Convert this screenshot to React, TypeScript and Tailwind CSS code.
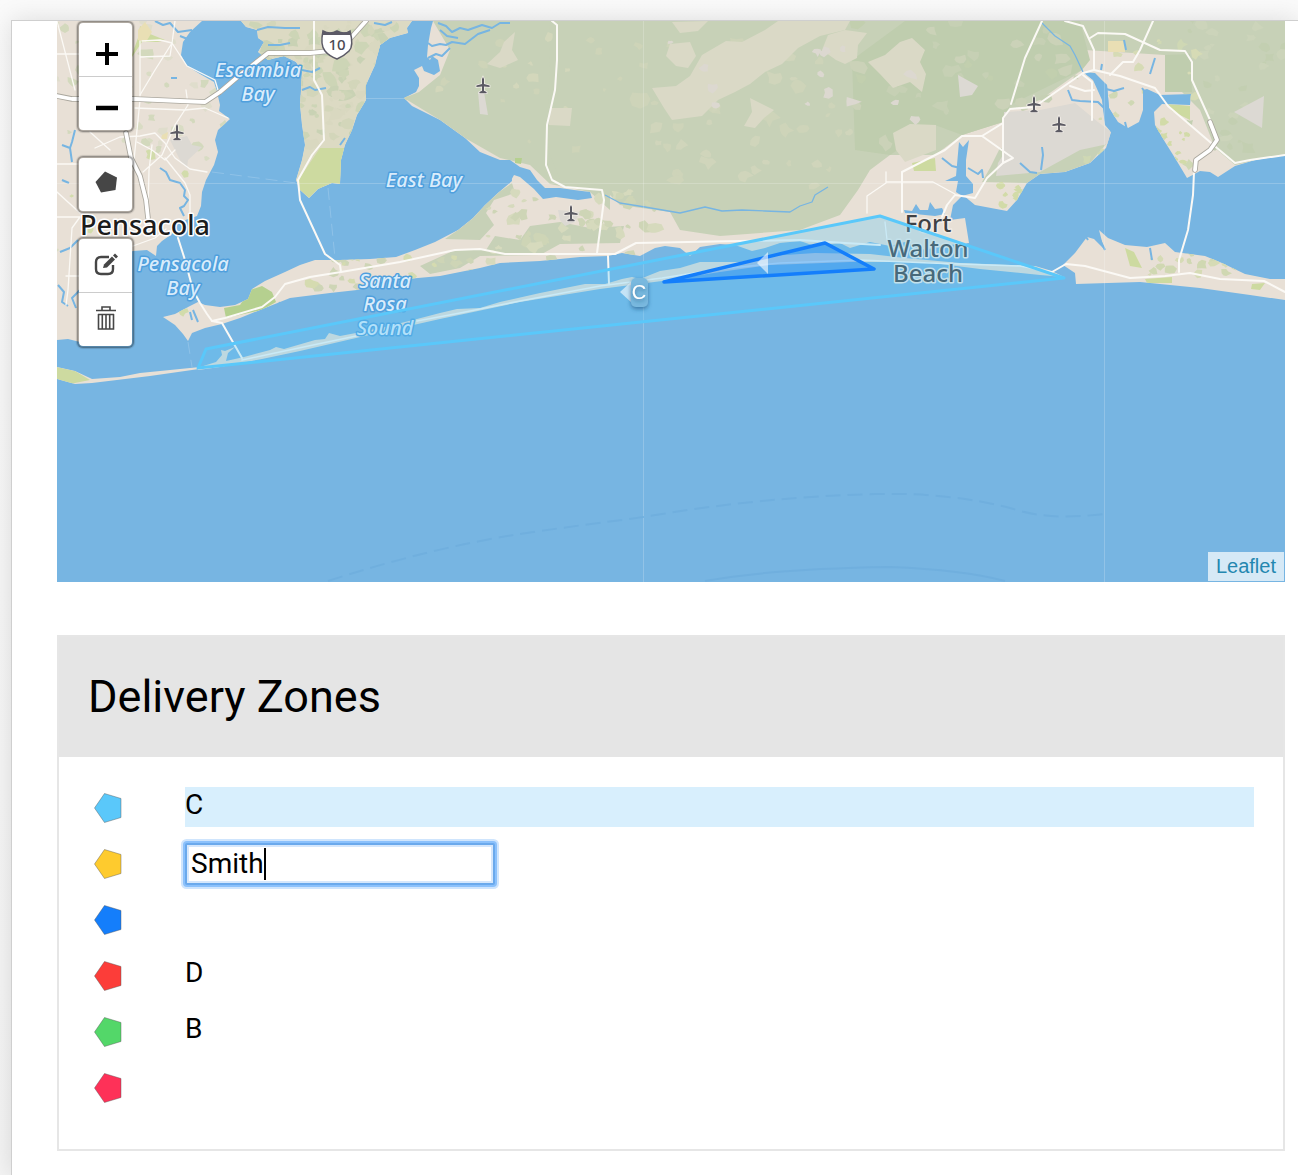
import React from "react";

/* ---------- map geometry ---------- */

const WEST =
  "M57 21H202L190 32L183 42L181 55L187 66L200 74L214 82L217 92L220 105L219 111L230 119L218 130L215 140L218 152L214 165L206 180L202 192L201 206L197 216L177 223L172 234L162 241L157 246L156 256L147 250L133 251L118 256L98 268L88 290L82 312L80 342L68 339L57 340Z";
const MIDDLE =
  "M241 21L246 27L257 30L258 38L264 42L258 52L268 60L284 56L296 62L302 72L301 90L300 105L302 125L305 145L302 160L296 180L300 190L309 198L318 189L332 183L340 184L341 160L345 145L352 130L357 115L366 100L366 85L375 65L380 45L390 38L408 33L407 28L412 21Z";
const MAIN =
  "M433 21L431 28L428 45L427 57L430 60L432 56L438 60L440 71L434 75L424 71L422 66L414 70L419 78L419 86L416 92L404 98L412 106L440 120L465 138L480 152L500 160L510 161L512 181L499 192L485 205L473 218L458 230L435 242L415 250L396 257L370 259L340 260L315 260L300 265L285 272L265 281L252 289L248 299L235 305L220 307L205 305L198 302L190 306L175 314L163 317L175 325L183 334L188 341L192 333L205 328L222 324L240 318L265 308L290 298L330 293L357 290L385 281L440 276L480 268L500 263L540 261L580 257L608 256L622 253L640 256L655 248L665 246L680 248L690 256L700 247L720 244L735 245L752 251L765 248L780 243L800 241L815 246L840 243L850 248L870 242L890 246L905 242L925 250L940 246L969 243L965 218L950 220L953 205L963 195L975 205L1007 211L1017 200L1027 183L1040 174L1065 172L1090 163L1106 148L1111 132L1105 125L1102 100L1093 80L1083 72L1093 74L1107 85L1109 108L1118 122L1128 128L1139 122L1143 110L1143 90L1147 89L1160 95L1191 94L1190 105L1162 104L1154 112L1155 125L1165 142L1175 158L1187 178L1200 171L1210 172L1218 177L1235 166L1255 160L1285 155V21Z";
const DESTIN =
  "M1063 265L1075 253L1087 237L1094 239L1104 249L1099 230L1108 238L1125 245L1147 247L1165 243L1175 252L1205 256L1222 263L1245 274L1270 279L1285 279V300L1250 295L1200 288L1140 282L1076 284L1075 273Z";
const ISLAND =
  "M197 368L216 362L222 355L221 350L225 351L235 347L228 353L226 361L244 357L270 350L276 347L284 349L315 340L325 339L329 333L340 336L356 333L385 327L417 319L440 313L457 309L480 308L500 302L540 293L585 284L605 284L622 279L632 277L640 279L660 271L680 268L700 262L740 262L770 256L815 253L870 254L905 258L960 263L1035 266L1052 271L1064 277L1040 275L980 269L925 262L850 262L770 265L720 272L662 281L600 289L520 302L440 319L400 328L356 338L300 351L262 359L220 367L198 370Z";
const WEST_ISLAND =
  "M57 367L75 371L92 379L120 377L140 373L190 368L200 367L199 369L150 376L92 383L75 384L57 379Z";

const FOREST = [
  "M433 21H610V210L590 192L550 184L530 165L500 158L465 138L440 120L404 98L419 92L440 75L450 50Z",
  "M550 21H1285V154L1235 165L1215 148L1200 110L1180 90L1165 55L1085 50L1082 70L1040 100L1004 112L1003 122L962 135L935 155L890 155L870 170L858 190L840 215L800 230L720 236L680 230L670 212L620 205L600 185L560 180L548 150Z",
  "M512 183L499 192L485 205L473 218L458 230L445 239L480 240L494 225L486 213L494 200L515 193Z",
  "M455 250L486 250L495 236L520 240L530 226L560 222L590 228L624 226L620 243L560 244L540 255L480 256L460 268L430 274L420 266Z",
  "M1000 148L1040 150L1085 142L1108 142L1090 163L1065 172L1040 174L1028 183L982 182L990 168Z",
];
const DARK_FOREST = [
  "M852 60L905 21H1080L1090 60L1082 70L1010 105L1003 122L962 135L935 125L890 155L855 150Z",
  "M1165 55L1190 54L1192 92L1165 92Z",
];
const SANDY = [
  "M652 88L676 86L690 76L702 55L726 41L742 42L765 30L778 21L850 21L845 30L820 36L798 48L782 64L765 72L750 84L735 92L718 100L702 116L672 120L664 108Z",
  "M828 35L845 30L867 33L858 45L857 58L845 64L836 60L822 50Z",
  "M868 62L885 55L900 42L912 38L925 50L920 62L926 74L922 92L910 82L893 88L880 74Z",
  "M672 22L708 21L698 31L680 33Z",
  "M487 64L500 52L504 42L515 32L512 50L518 60L500 68Z",
  "M550 108H572L570 126L549 125Z",
  "M750 98L762 104L774 110L764 118L755 128L744 126L752 112Z",
  "M893 133L910 124L936 125V150L905 162L896 150Z",
  "M670 44L690 42L696 56L688 68L676 66L666 56Z",
];
const GRAY = [
  "M1004 112L1040 110L1075 103L1098 122L1111 132L1108 144L1080 150L1040 172L996 176L998 163L1003 155Z",
  "M1234 112L1264 96L1262 128Z",
  "M958 75L978 86L972 95L960 97Z",
  "M170 140L187 136L192 145L202 147L188 160L187 168L180 160Z",
  "M478 92L484 92L488 115L480 114Z",
  "M558 210L580 212L575 222L565 226L560 220Z",
];
const LIME = [
  "M320 148L344 148L340 184L332 183L318 189L309 198L300 190L297 182Z",
  "M912 163L935 158L936 171L914 171Z",
  "M1168 104L1190 106V120L1172 111Z",
  "M57 367L75 371L90 380L70 384L57 379Z",
  "M1145 279L1172 277V283H1147Z",
  "M1252 284L1265 283L1260 290L1251 289Z",
  "M1125 248L1134 252L1142 268L1130 266Z",
  "M130 60L138 38L140 26L150 34L165 40L158 42L142 42Z",
];
const GREEN = [
  "M250 290L262 286L272 292L276 302L262 310L226 318L224 308L240 305Z",
  "M515 158L522 158L521 164L515 163Z",
];
const YELLOW = ["M1108 41H1125V52H1108Z", "M138 30L145 22L152 32L146 42L138 40Z", "M162 135L168 132L167 139L161 139Z"];

const WATER_AREAS = [
  "M510 160L520 167L530 170L537 180L545 188L560 188L574 190L590 192L592 198L578 200L556 197L543 199L534 189L520 177L514 175L509 184L500 182L500 160Z",
  "M959 142L963 147L969 140L966 160L966 176L973 184L973 193L962 196L956 192L958 181L945 181L956 176Z",
  "M904 210L912 211L916 204L920 210L928 210L930 202L935 209L942 208L945 214L935 216L905 213Z",
  "M1083 72L1095 73L1107 85L1109 108L1118 124L1112 134L1105 122L1102 96L1096 82Z",
];
const STREAMS = [
  "M605 195L620 203L645 207L680 213L705 207L722 211L742 210L765 211L790 212L800 206L812 202L815 195L828 187",
  "M1042 23L1055 36L1070 46L1075 55L1083 72",
  "M942 158L952 166L960 168M968 168L978 174L982 170L983 178M1037 173L1030 172L1020 163M1041 170L1043 155L1042 147",
  "M1068 90L1072 100L1080 101L1098 102L1104 108M1106 89L1114 91L1124 88M1125 122L1127 130M1145 92L1142 88",
  "M1124 40L1126 50M1155 58L1150 74M1100 240L1105 250M1150 248L1152 260M1088 240L1083 232M1102 64L1101 70",
  "M428 43L432 46L440 44L446 45L452 42L465 44L478 34L490 30M438 23L446 26L452 32L460 28L468 30L482 25L492 28L500 23L510 23M428 58L436 54L442 56L450 48M440 30L447 36L458 38",
  "M257 30L268 27L285 28L300 28M268 45L280 45L290 43M302 90L310 87L315 90L326 88M302 70L312 72L320 68M374 23L385 25L392 22",
  "M160 168L166 172L170 180L180 183L185 190L184 196L188 200L184 206L180 208L184 216M155 21L163 25L170 23L178 32L192 30M180 36L190 40L203 40",
  "M75 130L72 142L70 148L62 145M70 148L72 162M78 240L70 248L60 252M58 285L64 292L62 302L68 306M80 290L72 298L76 308",
  "M62 180L69 183M340 145L345 138M192 320L190 312M198 322L193 310M280 302L278 308M171 78H177",
];

const MAJOR_ROADS = [
  "M57 96L72 99L135 99L180 101L205 102L220 92L240 75L268 53L310 53L340 50L366 21",
  "M126 133L131 158L140 176L146 200L148 218",
  "M1210 122L1217 140L1210 150L1196 160L1195 170",
];
const ROADS = [
  "M314 21V80L322 95L324 140L312 155L298 180L300 200L325 254L340 265L341 272",
  "M212 321L225 318L262 307L275 297L285 284L310 277L341 272L400 262L455 250L480 249L505 254L600 254L615 254L636 243L740 241L800 240L845 243L880 245",
  "M552 21L557 25V60L555 90L547 125L546 165L552 180L565 187L602 190L604 200L597 253",
  "M178 238L185 260L193 290L200 303L207 314L212 321L222 323L242 358",
  "M608 256L609 284",
  "M1052 272L1066 264L1085 266L1130 278L1165 276L1190 273L1220 279L1264 281L1285 292",
  "M1042 21L1025 58L1011 104",
  "M1065 21L1083 26L1094 50V70L1083 73L1050 96L1034 107L1010 109L1003 118L1003 163",
  "M1094 70L1120 76L1155 88L1168 106L1217 148L1235 163L1250 160L1285 155",
  "M1090 38L1098 33L1125 34L1160 50L1185 51L1192 62V80L1210 120",
  "M1153 21L1140 50L1133 62L1123 62L1110 75M1083 75L1092 82L1092 120M1070 86L1085 91L1094 90",
  "M1194 172L1193 195L1188 230L1179 260V272",
  "M902 212V172L945 150L962 136H982L1013 158L1003 163L987 178L975 198L955 195L947 205L942 217M1003 123L982 136",
  "M886 172V183L867 196V213M886 182H933L955 194M887 240L885 222",
  "M57 54H80M57 21L75 90M140 41V100L133 170M140 57L170 56L172 43L160 40L142 41M175 21L172 43L187 66L215 80L218 90",
  "M172 43L155 70L140 95M57 164H78M57 217H80L72 228L68 290L66 305M66 276H82M57 192L80 213",
  "M90 132L110 150M95 148L120 137L140 136L155 133L165 143L175 158L190 169L207 172M137 142L152 150L165 160L175 150",
  "M152 145L149 170L148 210M186 90L188 105L175 125L162 155L143 172M135 108L185 110L205 108L228 118M165 158L185 183L190 195V216",
  "M133 246L155 238L166 229",
];
const BEACH_ROAD =
  "M242 360L275 353L356 336M417 321L460 313L520 301L600 286L662 278L720 269L780 263L860 260L930 263L1020 266L1052 272";

const PLANES: [number, number][] = [
  [177, 132],
  [483, 85],
  [571, 213],
  [1034, 104],
  [1059, 124],
];

/* Scattered vegetation patches, seeded so every render is identical. */
type Patch = { d: string; fill: string };
const scatter = (
  seed: number,
  count: number,
  [x0, y0, x1, y1]: [number, number, number, number],
  size: number,
  fills: string[],
): Patch[] => {
  let s = seed;
  const rnd = () => {
    s = (s * 16807) % 2147483647;
    return s / 2147483647;
  };
  return Array.from({ length: count }, () => {
    const cx = x0 + rnd() * (x1 - x0);
    const cy = y0 + rnd() * (y1 - y0);
    const r = size * (0.4 + rnd());
    const n = 8;
    const pts = Array.from({ length: n }, (_, i) => {
      const a = (i / n) * Math.PI * 2;
      const k = r * (0.45 + rnd() * 0.75);
      return `${(cx + Math.cos(a) * k * 1.2).toFixed(1)} ${(cy + Math.sin(a) * k).toFixed(1)}`;
    });
    return { d: `M${pts.join("L")}Z`, fill: fills[Math.floor(rnd() * fills.length)] };
  });
};

const PATCHES: Patch[] = [
  ...scatter(11, 50, [57, 21, 225, 150], 5, ["#d9dcc4", "#d3d9bd", "#dfddcc"]),
  ...scatter(12, 18, [57, 140, 215, 330], 4, ["#d8dcc3", "#d2dcab"]),
  ...scatter(21, 170, [245, 21, 400, 148], 6, ["#c9d2b4", "#d3d6ba", "#d9d8c0", "#cdd5b6"]),
  ...scatter(31, 50, [480, 190, 660, 262], 5, ["#ced5b6", "#d6dabd"]),
  ...scatter(32, 30, [300, 255, 480, 290], 4, ["#ced5b6", "#d5dbb0"]),
  ...scatter(41, 40, [640, 40, 850, 190], 6, ["#ced4b9", "#d0d5bb"]),
  ...scatter(42, 22, [440, 21, 640, 150], 4, ["#ced4b8", "#d3d7bb"]),
  ...scatter(43, 40, [855, 21, 1080, 150], 6, ["#c6d0b4", "#cbd2b8", "#c2cfae"]),
  ...scatter(44, 30, [1190, 21, 1285, 150], 5, ["#ccd4ba", "#c3cfb1"]),
  ...scatter(51, 30, [1085, 40, 1200, 170], 4, ["#d6dbb5", "#cfd8b4"]),
  ...scatter(52, 20, [1155, 120, 1190, 165], 3, ["#d2dba8"]),
  ...scatter(53, 22, [1150, 250, 1240, 275], 4, ["#d0d8b2", "#d6dbb5"]),
  ...scatter(54, 14, [1000, 183, 1022, 210], 3, ["#d2dba8"]),
];
const BARE_PATCHES = scatter(61, 14, [670, 40, 920, 125], 5, ["#dcd8d0"]);

const fillPaths = (items: string[], fill: string) =>
  items.map((d, i) => <path key={i} d={d} fill={fill} />);

function Plane({ x, y }: { x: number; y: number }) {
  return (
    <path
      fill="#5b5a63"
      stroke="#f3efe9"
      strokeWidth={1.5}
      paintOrder="stroke"
      d={`M${x} ${y - 8}l1 2v5l5.600 1.600v1.400l-5.600-.5v4.300l2.600 1.200v1.200h-7.200v-1.200l2.600-1.200v-4.300l-5.600.5v-1.400l5.600-1.600v-5z`}
    />
  );
}

function MapLabel({
  x,
  lines,
  kind = "water",
}: {
  x: number;
  lines: [number, string][];
  kind?: "water" | "city" | "town";
}) {
  const style = {
    water: "fill-[#d9ecfb] stroke-[#4f9fdd] text-[20px] italic font-medium",
    city: "fill-[#1c1c1c] stroke-white text-[27px] font-medium",
    town: "fill-[#3f4144] stroke-[#f1ece6] text-[24px] font-medium",
  }[kind];
  return (
    <text
      className={style}
      fontFamily="'Noto Sans', 'Open Sans', sans-serif"
      textAnchor="middle"
      strokeWidth={3}
      strokeLinejoin="round"
      paintOrder="stroke"
    >
      {lines.map(([y, t]) => (
        <tspan key={t} x={x} y={y}>
          {t}
        </tspan>
      ))}
    </text>
  );
}

function MapCanvas() {
  return (
    <svg
      className="block h-full w-full"
      viewBox="57 21 1228 561"
      preserveAspectRatio="xMinYMin slice"
      role="img"
      aria-label="Map of Pensacola and Fort Walton Beach"
    >
      <defs>
        <clipPath id="land">
          <path d={WEST} />
          <path d={MIDDLE} />
          <path d={MAIN} />
          <path d={DESTIN} />
          <path d={WEST_ISLAND} />
        </clipPath>
        <filter id="tagShadow" x="-50%" y="-50%" width="200%" height="200%">
          <feDropShadow dx="0" dy="2" stdDeviation="2" floodColor="#1d4e78" floodOpacity="0.6" />
        </filter>
      </defs>

      <rect x="57" y="21" width="1228" height="561" fill="#77b5e2" />
      {fillPaths([WEST, MIDDLE, MAIN, DESTIN, WEST_ISLAND, ISLAND], "#e8e0d6")}

      <g clipPath="url(#land)">
        <path d={MIDDLE} fill="#dcdac3" />
        {fillPaths(FOREST, "#c7d1b7")}
        {fillPaths(DARK_FOREST, "#bfcdae")}
        {PATCHES.map((p, i) => (
          <path key={i} d={p.d} fill={p.fill} />
        ))}
        {fillPaths(SANDY, "#dad9c6")}
        {BARE_PATCHES.map((p, i) => (
          <path key={i} d={p.d} fill={p.fill} />
        ))}
        {fillPaths(GRAY, "#dcd9d3")}
        {fillPaths(LIME, "#cddaa0")}
        {fillPaths(GREEN, "#b5d08f")}
        {fillPaths(YELLOW, "#e9dfb4")}
      </g>

      {fillPaths(WATER_AREAS, "#77b5e2")}
      {STREAMS.map((d, i) => (
        <path
          key={i}
          d={d}
          fill="none"
          stroke="#77b5e2"
          strokeWidth={i === 0 || i === 1 ? 1.3 : 2}
          strokeLinejoin="round"
        />
      ))}

      <g fill="none" strokeLinejoin="round" strokeLinecap="round">
        {ROADS.map((d, i) => (
          <path key={i} d={d} stroke="#fbf9f5" strokeWidth={i < 13 ? 2 : 1.3} />
        ))}
        <path d={BEACH_ROAD} stroke="#fbf9f5" strokeWidth={1.6} />
        {MAJOR_ROADS.map((d, i) => (
          <path key={i} d={d} stroke="#a9a69d" strokeWidth={5.5} />
        ))}
        {MAJOR_ROADS.map((d, i) => (
          <path key={i} d={d} stroke="#ffffff" strokeWidth={3.8} />
        ))}
      </g>

      {/* tile seams and maritime boundaries */}
      <path
        d="M643.500 21V582M1104.500 21V582M57 183.500H1285M366 98.500H404"
        stroke="#ffffff"
        strokeOpacity="0.2"
        fill="none"
      />
      <g fill="none" stroke="#70afde" strokeWidth="2">
        <path
          strokeDasharray="15 7"
          d="M328 581Q430 548 520 534C600 522 620 521 662 514C730 503 800 496 875 494C930 493 970 498 1010 508C1040 518 1070 518 1104 514"
        />
        <path d="M705 581C760 571 820 568 890 567C940 569 975 573 1005 581" />
      </g>
      <path
        d="M212 172L296 183M328 188L335 258M188 342L192 367"
        stroke="#8fc2e8"
        strokeDasharray="12 6"
        fill="none"
      />

      {PLANES.map(([x, y]) => (
        <Plane key={x} x={x} y={y} />
      ))}

      <g>
        <path
          d="M323 31Q330 35 337 31Q344 35 350 31Q354 46 349 51Q344 56 337 59Q329 56 325 51Q320 45 323 31Z"
          fill="#ffffff"
          stroke="#5c5a66"
          strokeWidth="1.500"
        />
        <path d="M323 31Q330 34 337 31Q344 34 350 31L351 35H322Z" fill="#5c5a66" />
        <text
          x="337"
          y="50"
          textAnchor="middle"
          className="fill-[#4c4b55] text-[15px] font-medium"
          fontFamily="'Noto Sans', sans-serif"
        >
          10
        </text>
      </g>

      <MapLabel x={258} lines={[[77, "Escambia"], [101, "Bay"]]} />
      <MapLabel x={424} lines={[[187, "East Bay"]]} />
      <MapLabel x={183} lines={[[271, "Pensacola"], [295, "Bay"]]} />
      <MapLabel x={385} lines={[[288, "Santa"], [311, "Rosa"], [335, "Sound"]]} />
      <MapLabel x={145} lines={[[235, "Pensacola"]]} kind="city" />
      <MapLabel x={928} lines={[[232, "Fort"]]} kind="town" />
      <MapLabel x={928} lines={[[257, "Walton"]]} kind="town" />
      <MapLabel x={928} lines={[[282, "Beach"]]} kind="town" />

      {/* delivery zone outlines */}
      <path
        d="M198 368L206 349L880 216L1064 278Z"
        fill="#5ac8fa"
        fillOpacity="0.3"
        stroke="#5ac8fa"
        strokeWidth="3"
        strokeLinejoin="round"
      />
      <path
        d="M664 282L825 243L874 269Z"
        fill="#147efb"
        fillOpacity="0.3"
        stroke="#147efb"
        strokeWidth="3.500"
        strokeLinejoin="round"
      />
      <path d="M757 263L768 252V274Z" fill="#ffffff" fillOpacity="0.6" />
      <path d="M620 292L632 281V303Z" fill="#ffffff" fillOpacity="0.6" />
      <rect
        x="631"
        y="278"
        width="17"
        height="29"
        rx="5"
        fill="#79b9df"
        filter="url(#tagShadow)"
      />
      <text
        x="639"
        y="299"
        textAnchor="middle"
        className="fill-white text-[20px]"
        fontFamily="'Liberation Sans', sans-serif"
        filter="url(#tagShadow)"
      >
        C
      </text>
    </svg>
  );
}

/* ---------- map controls ---------- */

function ControlGroup({ children }: { children: React.ReactNode }) {
  return (
    <div className="divide-y divide-[#ccc] rounded-md border-2 border-black/25 bg-white bg-clip-padding shadow-[0_0_1px_1px_rgba(0,0,0,0.15)]">
      {children}
    </div>
  );
}

function ControlButton({ label, children }: { label: string; children: React.ReactNode }) {
  return (
    <button
      type="button"
      aria-label={label}
      className="box-content flex h-[53px] w-[53px] items-center justify-center"
    >
      <svg width="30" height="36" viewBox="0 0 30 36" fill="none">
        {children}
      </svg>
    </button>
  );
}

function MapControls() {
  return (
    <div className="absolute top-0 left-5 flex flex-col gap-6">
      <ControlGroup>
        <ControlButton label="Zoom in">
          <path d="M5 22H27M16 11V33" stroke="#000" strokeWidth="4" />
        </ControlButton>
        <ControlButton label="Zoom out">
          <path d="M5 22H27" stroke="#000" strokeWidth="4.500" />
        </ControlButton>
      </ControlGroup>
      <ControlGroup>
        <ControlButton label="Draw a polygon">
          <path d="M14 4.500L26 10.500L24.500 23L10 25.500L4.500 15Z" fill="#464646" />
        </ControlButton>
      </ControlGroup>
      <ControlGroup>
        <ControlButton label="Edit layers">
          <path
            d="M18 9H10Q5 9 5 14V21Q5 26 10 26H17Q22 26 22 21V17"
            stroke="#464646"
            strokeWidth="2.400"
          />
          <path d="M12 20L13 16.500L21 8.500L24 11.500L16 19.500Z" fill="#464646" />
          <path d="M22 7.500L24 5.500L27 8.500L25 10.500Z" fill="#464646" />
        </ControlButton>
        <ControlButton label="Delete layers">
          <path
            d="M5 8.500H25M11 8V5H19V8M7 12.500H23M7.500 12V27H22.500V12M11.300 12.500V26.500M15 12.500V26.500M18.700 12.500V26.500"
            stroke="#464646"
            strokeWidth="1.600"
          />
        </ControlButton>
      </ControlGroup>
    </div>
  );
}

/* ---------- zone list ---------- */

type Zone = { color: string; name: string; active?: boolean; editing?: boolean };

const ZONES: Zone[] = [
  { color: "#5ac8fa", name: "C", active: true },
  { color: "#fecb2e", name: "Smith", editing: true },
  { color: "#147efb", name: "" },
  { color: "#fc3d39", name: "D" },
  { color: "#53d769", name: "B" },
  { color: "#fe3158", name: "" },
];

function ZoneRow({ zone }: { zone: Zone }) {
  return (
    <li className="flex h-10 items-start">
      <svg className="mt-1 mr-[63px] h-9 w-7 shrink-0" viewBox="0 0 28 36" aria-hidden="true">
        <path
          d="M0.500 17L10.500 2.500L27 7.500V26.500L10.500 31.500Z"
          fill={zone.color}
          stroke="#555"
          strokeOpacity="0.6"
          strokeWidth="0.700"
        />
      </svg>
      {zone.editing ? (
        <div className="relative">
          <input
            type="text"
            aria-label="Zone name"
            defaultValue={zone.name}
            className="block h-[42px] w-[310px] rounded-xs border-2 border-[#6aa9ec] bg-white px-1 text-[28px] caret-transparent shadow-[0_0_0_2px_#8bc1fc,0_0_0_4px_#cfe5fd,inset_0_0_0_2px_#d5e7fc] outline-none"
          />
          <span aria-hidden="true" className="absolute top-[5px] left-[79px] h-8 w-0.5 bg-black" />
        </div>
      ) : (
        <p className={zone.active ? "h-10 flex-1 bg-[#d8effd] leading-9" : "h-10 flex-1 leading-9"}>
          {zone.name}
        </p>
      )}
    </li>
  );
}

export default function App() {
  return (
    <div className="overflow-hidden bg-linear-to-b from-[#fafafa] to-[#f4f4f4] pt-5 font-['Roboto',sans-serif] text-[28px] text-black">
      <main className="ml-[11px] border-t border-l border-[#cfcfcf] bg-white pr-[13px] pb-6 pl-[45px] shadow-[0_0_24px_rgba(0,0,0,0.12)]">
        <section className="relative h-[561px] overflow-hidden" aria-label="Delivery map">
          <MapCanvas />
          <MapControls />
          <a
            href="#leaflet"
            className="absolute right-px bottom-px bg-white/70 px-2 text-[20px] leading-[29px] text-[#2487b0] font-['Liberation_Sans',sans-serif]"
          >
            Leaflet
          </a>
        </section>

        <section className="mt-[53px] border-2 border-[#e6e6e6]">
          <h1 className="bg-[#e5e5e5] px-[29px] text-[45px] leading-[120px]">Delivery Zones</h1>
          <ul className="flex flex-col gap-4 pt-[30px] pr-[29px] pb-[42px] pl-[35px]">
            {ZONES.map((z) => (
              <ZoneRow key={z.color} zone={z} />
            ))}
          </ul>
        </section>
      </main>
    </div>
  );
}
